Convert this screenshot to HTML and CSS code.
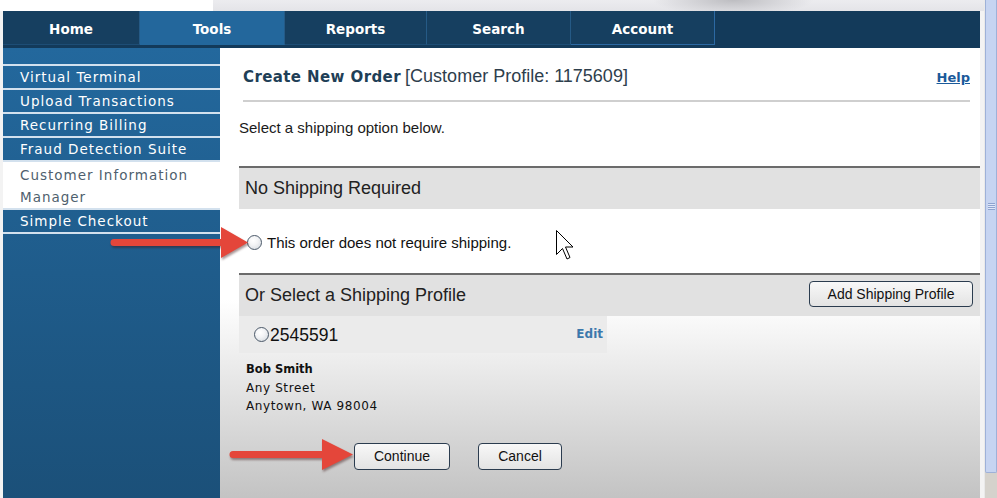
FILE: index.html
```html
<!DOCTYPE html>
<html lang="en">
<head>
<meta charset="utf-8">
<title>Create New Order</title>
<link rel="stylesheet" href="styles.css">
</head>
<body>
<div class="window">
  <div class="page">
    <div class="banner">
      <div class="banner-left"></div>
      <div class="banner-img"></div>
    </div>
    <nav class="nav">
      <a class="tab tab-home">Home</a>
      <a class="tab tab-tools active">Tools</a>
      <a class="tab tab-reports">Reports</a>
      <a class="tab tab-search">Search</a>
      <a class="tab tab-account">Account</a>
    </nav>
    <div class="content">
      <aside class="sidebar">
        <ul class="menu">
          <li>Virtual Terminal</li>
          <li>Upload Transactions</li>
          <li>Recurring Billing</li>
          <li>Fraud Detection Suite</li>
          <li class="current">Customer Information Manager</li>
          <li>Simple Checkout</li>
        </ul>
      </aside>
      <main class="main">
        <div class="title-row">
          <h1 class="title"><b>Create New Order</b> <span class="profile-ref">[Customer Profile: 1175609]</span></h1>
          <a class="help">Help</a>
        </div>
        <p class="intro">Select a shipping option below.</p>
        <section class="section">
          <div class="section-head">No Shipping Required</div>
          <div class="option"><span class="radio"></span>This order does not require shipping.</div>
        </section>
        <section class="section">
          <div class="section-head">Or Select a Shipping Profile <button class="btn btn-add">Add Shipping Profile</button></div>
          <div class="profile"><span class="radio"></span><span class="pid">2545591</span><a class="edit">Edit</a></div>
          <div class="address"><b>Bob Smith</b><br>Any Street<br>Anytown, WA 98004</div>
        </section>
        <div class="actions">
          <button class="btn btn-continue">Continue</button>
          <button class="btn btn-cancel">Cancel</button>
        </div>
      </main>
    </div>
  </div>
  <div class="scrollbar">
    <div class="thumb"><span class="grip"></span></div>
  </div>
  <svg class="overlay" width="997" height="498" viewBox="0 0 997 498" aria-hidden="true">
    <g class="arrows">
      <path d="M114,239 L221,239 L221,227 L248,242.5 L221,258 L221,246 L114,246 A3.5,3.5 0 0 1 114,239 Z"/>
      <path d="M233,451 L322,451 L322,439 L353,454.5 L322,470 L322,458 L233,458 A3.5,3.5 0 0 1 233,451 Z"/>
    </g>
    <path class="cursor" d="M556.5,230.5 L556.5,254.5 L562.5,248.5 L567,259 L570,257.5 L565.5,247 L573,247 Z"/>
  </svg>
</div>
</body>
</html>
```
FILE: styles.css
```css
* { box-sizing: border-box; }
html, body { margin: 0; padding: 0; }
body {
  width: 997px;
  height: 498px;
  overflow: hidden;
  background: #ffffff;
  font-family: "Liberation Sans", Arial, sans-serif;
}
.window {
  position: relative;
  display: flex;
  width: 997px;
  height: 498px;
}
.page {
  width: 984px;
  flex: none;
  display: flex;
  flex-direction: column;
  background: #f3f3f3;
  padding-right: 4px;
}
.banner {
  height: 11px;
  display: flex;
  margin-right: -4px;
}
.banner-left { width: 213px; background: #ffffff; }
.banner-img {
  flex: 1;
  background:
    radial-gradient(ellipse 80px 16px at 520px 0px, #bdbdc1 0, rgba(205,205,209,0.7) 55%, rgba(233,233,237,0) 100%),
    linear-gradient(#ececef, #e4e4e8);
}
.nav {
  height: 37px;
  margin-left: 3px;
  display: flex;
  align-items: flex-start;
  background: #133a5a;
}
.tab {
  height: 34px;
  display: flex;
  align-items: center;
  justify-content: center;
  padding-top: 2px;
  color: #ffffff;
  font-family: "DejaVu Sans", Verdana, sans-serif;
  font-weight: bold;
  font-size: 13.5px;
  background: #163f60;
  border-right: 1px solid #255a86;
  border-bottom: 1px solid #1d4d75;
}
.tab-home { width: 137px; }
.tab-tools { width: 145px; }
.tab-reports { width: 142px; }
.tab-search { width: 144px; }
.tab-account { width: 144px; border-right-color: #2c69a3; border-bottom-color: #2c69a3; }
.tab.active { background: #23679c; border-bottom-color: #23679c; }

.content {
  flex: 1;
  display: flex;
  margin-left: 3px;
}
.sidebar {
  width: 217px;
  flex: none;
  padding-top: 16px;
  background: linear-gradient(#23689d, #1b5079);
}
.menu {
  list-style: none;
  margin: 0;
  padding: 0;
  border-top: 2px solid #d3e1ee;
}
.menu li {
  height: 24px;
  padding-left: 17px;
  line-height: 22px;
  color: #ffffff;
  font-family: "DejaVu Sans", Verdana, sans-serif;
  font-size: 13.5px;
  letter-spacing: 1px;
  border-bottom: 2px solid #d3e1ee;
  white-space: nowrap;
}
.menu li.current {
  height: 48px;
  padding-top: 2px;
  white-space: normal;
  background: #ffffff;
  color: #4f5f6e;
  padding-right: 10px;
}

.main {
  flex: 1;
  display: flex;
  flex-direction: column;
  padding-left: 19px;
  background: linear-gradient(#ffffff 0, #ffffff 252px, #c3c3c3 450px);
}
.title-row {
  display: flex;
  justify-content: space-between;
  align-items: baseline;
  margin-left: 4px;
  margin-right: 10px;
  padding-top: 18px;
  padding-bottom: 13px;
  border-bottom: 2px solid #cfcfcf;
}
.title {
  margin: 0;
  font-size: 15px;
  line-height: 20px;
  font-weight: normal;
  white-space: nowrap;
}
.title b {
  font-family: "DejaVu Sans", Verdana, sans-serif;
  font-weight: bold;
  font-size: 15px;
  color: #1f3f57;
  letter-spacing: 0.4px;
}
.profile-ref {
  font-family: "Liberation Sans", Arial, sans-serif;
  font-size: 18px;
  color: #2e3e4c;
}
.help {
  font-family: "DejaVu Sans", Verdana, sans-serif;
  font-weight: bold;
  font-size: 13px;
  color: #1a5a9a;
  text-decoration: underline;
}
.intro {
  margin: 18px 0 30px;
  font-size: 15px;
  line-height: 16px;
  color: #1a1a1a;
}
.section-head {
  height: 43px;
  display: flex;
  align-items: center;
  justify-content: space-between;
  padding-left: 6px;
  padding-right: 7px;
  border-top: 2px solid #6b6b6b;
  background: #e1e1e1;
  font-size: 18px;
  color: #222222;
}
.option {
  height: 64px;
  display: flex;
  align-items: center;
  padding-left: 8px;
  padding-top: 3px;
  font-size: 15px;
  color: #111111;
}
.radio {
  width: 15px;
  height: 15px;
  flex: none;
  border: 1px solid #4b5969;
  border-radius: 50%;
  background: radial-gradient(circle at 40% 35%, #ffffff 0, #f3f4f6 40%, #cfd5db 100%);
  margin-right: 5px;
}
.btn {
  font-family: "Liberation Sans", Arial, sans-serif;
  font-size: 14px;
  color: #111111;
  border: 1px solid #2b3c4f;
  border-radius: 4px;
  background: linear-gradient(#f8f8f8, #e3e3e3);
  padding: 0;
}
.btn-add { width: 164px; height: 26px; margin-top: -4px; }
.profile {
  width: 368px;
  height: 37px;
  display: flex;
  align-items: center;
  padding-left: 15px;
  padding-right: 4px;
  background: #ebebeb;
}
.profile .radio { margin-right: 1px; }
.pid { font-size: 17.5px; color: #111111; padding-top: 2px; }
.edit {
  margin-left: auto;
  font-family: "DejaVu Sans", Verdana, sans-serif;
  font-weight: bold;
  font-size: 12px;
  color: #3c78ac;
  padding-bottom: 1px;
}
.address {
  padding-top: 7px;
  margin-left: 7px;
  font-family: "DejaVu Sans", Verdana, sans-serif;
  font-size: 12px;
  line-height: 18.5px;
  letter-spacing: 0.6px;
  color: #111111;
}
.address b { letter-spacing: 0; font-size: 11.5px; }
.actions {
  display: flex;
  gap: 28px;
  margin-top: 27px;
  padding-left: 115px;
}
.btn-continue { width: 96px; height: 27px; }
.btn-cancel { width: 84px; height: 27px; }

.scrollbar {
  width: 13px;
  flex: none;
  background: #d5d2cc;
  border-left: 1px solid #e9e9e9;
}
.thumb {
  height: 473px;
  background: #c6d4f1;
  border: 1px solid #9eb1d8;
  border-top: none;
  border-radius: 0 0 2px 2px;
  padding-top: 203px;
  display: flex;
  justify-content: center;
}
.grip {
  width: 7px;
  height: 7px;
  background: repeating-linear-gradient(#8ea3cf 0 1px, #dfe7f8 1px 2px);
}
.overlay {
  position: absolute;
  left: 0;
  top: 0;
  pointer-events: none;
}
.arrows {
  fill: #e4463a;
  filter: drop-shadow(1px 2px 1px rgba(60, 20, 20, 0.45));
}
.cursor {
  fill: #ffffff;
  stroke: #000000;
  stroke-width: 1;
  stroke-linejoin: miter;
}
```
